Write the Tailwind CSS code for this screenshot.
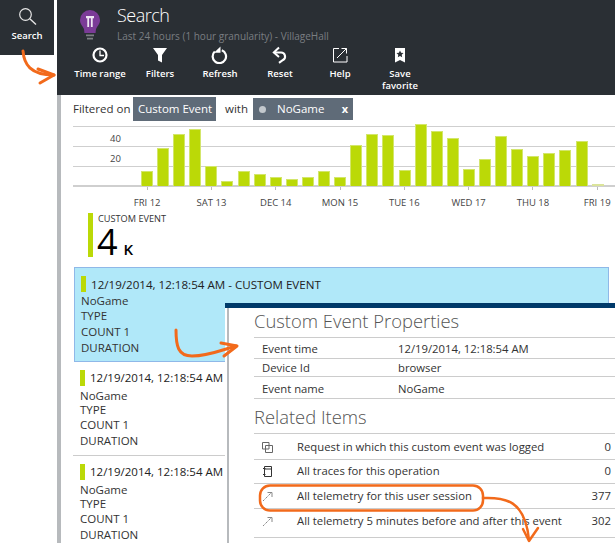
<!DOCTYPE html>
<html lang="en">
<head>
<meta charset="UTF-8" />
<title>Search</title>
<script src="https://cdn.jsdelivr.net/npm/@tailwindcss/browser@4"></script>
</head>
<body class="bg-white">
<div class="relative flex w-[615px] h-[543px] overflow-hidden bg-white font-['Open_Sans',sans-serif] text-[#333]">

	<!-- left nav -->
	<div class="w-[54px] h-[55px] mr-[3px] bg-[#2a2f34] flex flex-col items-center shrink-0">
		<svg class="mt-[7px] ml-[1px]" width="20" height="20" viewBox="0 0 20 20" fill="none" stroke="#e6e6e6">
			<circle cx="7.500" cy="7.500" r="5.800" stroke-width="1.200" />
			<path d="M11.800 11.800 18 17.500" stroke-width="1.400" />
		</svg>
		<span class="mt-[2px] text-[9.500px] leading-[14px] font-semibold text-white">Search</span>
	</div>

	<div class="w-[558px] flex flex-col">
		<!-- header -->
		<div class="h-[95px] bg-[#2a2f34] shrink-0">
			<div class="flex h-[44px]">
				<svg class="ml-[23px] mt-[10px]" width="20" height="30" viewBox="0 0 20 30">
					<path d="M10 0a10 10 0 0 1 10 10c0 4-2.500 6-3.600 8.300-.5 1-.7 2.500-.8 4.700H4.400c-.1-2.200-.3-3.700-.8-4.700C2.500 16 0 14 0 10A10 10 0 0 1 10 0z" fill="#7b3b97" />
					<path d="M6 6h8v2.200h-1.300V17h-1.800V8.200H9.100V17H7.300V8.200H6z" fill="#eee6f3" />
					<path d="M6 24.500h8v1.800H6zM7 27.700h6v1.800H7z" fill="#7d8083" />
				</svg>
				<div class="ml-[17px]">
					<div class="mt-[2px] text-[18px] leading-[26px] tracking-[-0.5px] font-light text-white">Search</div>
					<div class="mt-[1px] text-[10px] leading-[14px] text-[#7a7e82]">Last 24 hours (1 hour granularity) - VillageHall</div>
				</div>
			</div>
			<div class="flex pl-[13px] text-[9.500px] leading-[12px] font-semibold text-white text-center">
				<div class="w-[60px] flex flex-col items-center">
					<svg width="18" height="18" viewBox="0 0 18 18" fill="none" stroke="#fff" class="mt-[2px]">
						<circle cx="9" cy="9" r="6.500" stroke-width="2.200" />
						<path d="M9 4.500V9.500H13" stroke-width="1.300" />
					</svg>
					<span class="mt-[4px]">Time range</span>
				</div>
				<div class="w-[60px] flex flex-col items-center">
					<svg width="18" height="18" viewBox="0 0 18 18" fill="#fff" class="mt-[2px]">
						<path d="M2 2h14L11 9v7.500L7 14.500V9z" />
					</svg>
					<span class="mt-[4px]">Filters</span>
				</div>
				<div class="w-[60px] flex flex-col items-center">
					<svg width="18" height="18" viewBox="0 0 18 18" fill="none" stroke="#fff" class="mt-[2px]">
						<path d="M3.800 5.500a6.700 6.700 0 1 0 7-1.300" stroke-width="2.200" />
						<path d="M3 6.800h6.500V.5z" fill="#fff" stroke="none" />
					</svg>
					<span class="mt-[4px]">Refresh</span>
				</div>
				<div class="w-[60px] flex flex-col items-center">
					<svg width="18" height="18" viewBox="0 0 18 18" fill="none" stroke="#fff" class="mt-[2px]">
						<path d="M3.500 6.500h6.500a4 4 0 0 1 2 7.500L8 16.800" stroke-width="2.100" />
						<path d="M8 1.500 2.800 6.500 8 11" stroke-width="2" />
					</svg>
					<span class="mt-[4px]">Reset</span>
				</div>
				<div class="w-[60px] flex flex-col items-center">
					<svg width="18" height="18" viewBox="0 0 18 18" fill="none" stroke="#fff" class="mt-[2px]">
						<path d="M8 2.500H2.500V16H16V10" stroke-width="1" />
						<path d="M6 12 15.500 2.500M10.500 2.500h5v5" stroke-width="1" />
					</svg>
					<span class="mt-[4px]">Help</span>
				</div>
				<div class="w-[60px] flex flex-col items-center">
					<svg width="18" height="18" viewBox="0 0 18 18" class="mt-[2px]">
						<path d="M4 2h10v14.500l-5-2.500-5 2.500z" fill="#fff" />
						<path d="m9 4.500 1.100 2.300 2.400.3-1.800 1.700.5 2.500L9 10.100l-2.200 1.200.5-2.500-1.800-1.700 2.400-.3z" fill="#2a2f34" />
					</svg>
					<span class="mt-[4px] block">Save</span>
					<span class="block">favorite</span>
				</div>
			</div>
		</div>

		<!-- content -->
		<div class="flex-1 border-l-[4px] border-[#b7babd] pl-[12px]">
			<div class="flex items-center h-[24px] mt-[2px] mb-[3px] text-[11.500px]">
				<span class="w-[60px]">Filtered on</span>
				<span class="w-[83px] h-[24px] pl-[5px] leading-[24px] bg-[#5f6b78] text-white">Custom Event</span>
				<span class="ml-[9px] w-[28px]">with</span>
				<span class="flex items-center w-[100px] h-[22px] bg-[#5f6b78] text-white">
					<span class="ml-[6px] w-[7px] h-[7px] rounded-full bg-[#c3c8cd]"></span>
					<span class="ml-[11px]">NoGame</span>
					<span class="ml-auto mr-[5px] font-bold text-[11px]">x</span>
				</span>
			</div>

			<!-- chart -->
			<div class="relative h-[63px] border-b-2 border-[#cfcfcf]">
				<div class="absolute left-0 right-0 top-[2px] h-[1px] bg-[#cfcfcf]"></div>
				<div class="absolute left-0 right-0 top-[22px] h-[1px] bg-[#cfcfcf]"></div>
				<div class="absolute left-0 right-0 top-[42px] h-[1px] bg-[#cfcfcf]"></div>
				<span class="absolute left-[37px] top-[8px] text-[9.500px] leading-[14px] text-[#444]">40</span>
				<span class="absolute left-[37px] top-[28px] text-[9.500px] leading-[14px] text-[#444]">20</span>
				<div class="relative flex items-end gap-[4.100px] pl-[68px] h-[62px]">
					<div class="w-[12px] bg-[#bbd907] border border-b-0 border-[#d3e66b]" style="height:15px"></div>
					<div class="w-[12px] bg-[#bbd907] border border-b-0 border-[#d3e66b]" style="height:38px"></div>
					<div class="w-[12px] bg-[#bbd907] border border-b-0 border-[#d3e66b]" style="height:52px"></div>
					<div class="w-[12px] bg-[#bbd907] border border-b-0 border-[#d3e66b]" style="height:57px"></div>
					<div class="w-[12px] bg-[#bbd907] border border-b-0 border-[#d3e66b]" style="height:20px"></div>
					<div class="w-[12px] bg-[#bbd907] border border-b-0 border-[#d3e66b]" style="height:5px"></div>
					<div class="w-[12px] bg-[#bbd907] border border-b-0 border-[#d3e66b]" style="height:15px"></div>
					<div class="w-[12px] bg-[#bbd907] border border-b-0 border-[#d3e66b]" style="height:12px"></div>
					<div class="w-[12px] bg-[#bbd907] border border-b-0 border-[#d3e66b]" style="height:9px"></div>
					<div class="w-[12px] bg-[#bbd907] border border-b-0 border-[#d3e66b]" style="height:7px"></div>
					<div class="w-[12px] bg-[#bbd907] border border-b-0 border-[#d3e66b]" style="height:9px"></div>
					<div class="w-[12px] bg-[#bbd907] border border-b-0 border-[#d3e66b]" style="height:15px"></div>
					<div class="w-[12px] bg-[#bbd907] border border-b-0 border-[#d3e66b]" style="height:9px"></div>
					<div class="w-[12px] bg-[#bbd907] border border-b-0 border-[#d3e66b]" style="height:41px"></div>
					<div class="w-[12px] bg-[#bbd907] border border-b-0 border-[#d3e66b]" style="height:52px"></div>
					<div class="w-[12px] bg-[#bbd907] border border-b-0 border-[#d3e66b]" style="height:51px"></div>
					<div class="w-[12px] bg-[#bbd907] border border-b-0 border-[#d3e66b]" style="height:16px"></div>
					<div class="w-[12px] bg-[#bbd907] border border-b-0 border-[#d3e66b]" style="height:62px"></div>
					<div class="w-[12px] bg-[#bbd907] border border-b-0 border-[#d3e66b]" style="height:55px"></div>
					<div class="w-[12px] bg-[#bbd907] border border-b-0 border-[#d3e66b]" style="height:48px"></div>
					<div class="w-[12px] bg-[#bbd907] border border-b-0 border-[#d3e66b]" style="height:17px"></div>
					<div class="w-[12px] bg-[#bbd907] border border-b-0 border-[#d3e66b]" style="height:27px"></div>
					<div class="w-[12px] bg-[#bbd907] border border-b-0 border-[#d3e66b]" style="height:50px"></div>
					<div class="w-[12px] bg-[#bbd907] border border-b-0 border-[#d3e66b]" style="height:37px"></div>
					<div class="w-[12px] bg-[#bbd907] border border-b-0 border-[#d3e66b]" style="height:30px"></div>
					<div class="w-[12px] bg-[#bbd907] border border-b-0 border-[#d3e66b]" style="height:33px"></div>
					<div class="w-[12px] bg-[#bbd907] border border-b-0 border-[#d3e66b]" style="height:36px"></div>
					<div class="w-[12px] bg-[#bbd907] border border-b-0 border-[#d3e66b]" style="height:45px"></div>
					<div class="w-[12px] bg-[#dbe49a]" style="height:2px"></div>
				</div>
			</div>
			<div class="flex pl-[42px] text-[9.500px] leading-[14px] text-[#444] whitespace-nowrap">
				<div class="w-[64.300px] shrink-0 flex flex-col items-center"><i class="block w-px h-[3px] bg-[#bbb]"></i><span class="mt-[6px]">FRI 12</span></div>
				<div class="w-[64.300px] shrink-0 flex flex-col items-center"><i class="block w-px h-[3px] bg-[#bbb]"></i><span class="mt-[6px]">SAT 13</span></div>
				<div class="w-[64.300px] shrink-0 flex flex-col items-center"><i class="block w-px h-[3px] bg-[#bbb]"></i><span class="mt-[6px]">DEC 14</span></div>
				<div class="w-[64.300px] shrink-0 flex flex-col items-center"><i class="block w-px h-[3px] bg-[#bbb]"></i><span class="mt-[6px]">MON 15</span></div>
				<div class="w-[64.300px] shrink-0 flex flex-col items-center"><i class="block w-px h-[3px] bg-[#bbb]"></i><span class="mt-[6px]">TUE 16</span></div>
				<div class="w-[64.300px] shrink-0 flex flex-col items-center"><i class="block w-px h-[3px] bg-[#bbb]"></i><span class="mt-[6px]">WED 17</span></div>
				<div class="w-[64.300px] shrink-0 flex flex-col items-center"><i class="block w-px h-[3px] bg-[#bbb]"></i><span class="mt-[6px]">THU 18</span></div>
				<div class="w-[64.300px] shrink-0 flex flex-col items-center"><i class="block w-px h-[3px] bg-[#bbb]"></i><span class="mt-[6px]">FRI 19</span></div>
			</div>

			<!-- metric -->
			<div class="flex mt-[3px] ml-[15px] h-[44px]">
				<div class="w-[5px] bg-[#bbd907]"></div>
				<div class="ml-[5px]">
					<div class="text-[9.200px] leading-[12px] text-[#333]">CUSTOM EVENT</div>
					<div class="flex items-baseline mt-[1px] text-black">
						<span class="-ml-[1px] text-[36px] leading-[32px]">4</span>
						<span class="ml-[6px] text-[15px] leading-[15px] font-semibold">K</span>
					</div>
				</div>
			</div>

			<!-- events -->
			<div class="mt-[10px] ml-[1px] w-[535px] h-[95px] bg-[#b0e8f9] border border-[#8fb8e8] pl-[6px] pt-[8px] text-[11.500px] leading-[16px]">
				<div class="flex items-center h-[16px] mb-[1px]"><span class="shrink-0 w-[5px] h-[16px] bg-[#bbd907]"></span><span class="ml-[5px] pt-[1px] text-[11.600px] text-[#222]">12/19/2014, 12:18:54 AM - CUSTOM EVENT</span></div>
				<div>NoGame</div>
				<div class="-mt-[1px]">TYPE</div>
				<div>COUNT 1</div>
				<div>DURATION</div>
			</div>
			<div class="w-[152px] h-[94px] pt-[8px] pl-[7px] border-b border-[#ccc] text-[11.500px] leading-[15.500px]">
				<div class="flex items-center h-[16px] whitespace-nowrap"><span class="shrink-0 w-[5px] h-[16px] bg-[#bbd907]"></span><span class="ml-[5px] text-[#222]">12/19/2014, 12:18:54 AM</span></div>
				<div class="mt-[2px]">NoGame</div>
				<div class="-mt-[2px]">TYPE</div>
				<div>COUNT 1</div>
				<div>DURATION</div>
			</div>
			<div class="w-[152px] pt-[8px] pl-[7px] text-[11.500px] leading-[15.500px]">
				<div class="flex items-center h-[16px] whitespace-nowrap"><span class="shrink-0 w-[5px] h-[16px] bg-[#bbd907]"></span><span class="ml-[5px] text-[#222]">12/19/2014, 12:18:54 AM</span></div>
				<div class="mt-[2px]">NoGame</div>
				<div class="-mt-[2px]">TYPE</div>
				<div>COUNT 1</div>
				<div>DURATION</div>
			</div>
		</div>
	</div>

	<!-- properties blade, over the list -->
	<div class="absolute left-[225px] top-[303px] right-0 bottom-0 bg-white border-t-[5px] border-[#003a6a]">
		<div class="ml-[2px] h-full border-l-[2px] border-[#b7babd] pl-[25px] text-[11.300px] text-[#333]">
			<div class="h-[29px] text-[18.400px] leading-[25px] font-light text-[#555]">Custom Event Properties</div>
			<div class="flex items-center h-[21px] pt-[3px] border-t border-[#ccc] pl-[8px]"><span class="w-[136px]">Event time</span><span>12/19/2014, 12:18:54 AM</span></div>
			<div class="flex items-center h-[18px] pt-[1px] border-t border-[#ccc] pl-[8px]"><span class="w-[136px]">Device Id</span><span>browser</span></div>
			<div class="flex items-center h-[23px] pt-[3px] border-t border-b border-[#ccc] pl-[8px]"><span class="w-[136px]">Event name</span><span>NoGame</span></div>
			<div class="h-[34px] text-[18.400px] leading-[35px] font-light text-[#555]">Related Items</div>
			<div class="flex items-center h-[26px] pt-[1px] border-t border-[#ccc]">
				<svg class="ml-[8px]" width="11" height="11" viewBox="0 0 11 11" fill="none" stroke="#666"><path d="M.5.500h6.500v6.500H.5zM3.500 3.500h7v7h-7z" /></svg>
				<span class="ml-[24px]">Request in which this custom event was logged</span><span class="ml-auto mr-[4px]">0</span>
			</div>
			<div class="flex items-center h-[24px] border-t border-[#ccc]">
				<svg class="ml-[8px]" width="11" height="11" viewBox="0 0 11 11" fill="none" stroke="#333"><path d="M2.500.500h7v10h-7zM2.500 3h7M1 2.500h2.500M1 8.500h2.500" /></svg>
				<span class="ml-[24px]">All traces for this operation</span><span class="ml-auto mr-[4px]">0</span>
			</div>
			<div class="flex items-center h-[25px] pt-[1px] border-t border-[#ccc]">
				<svg class="ml-[8px]" width="11" height="11" viewBox="0 0 11 11" fill="none" stroke="#888"><path d="M1 10 9.500 1.500" stroke-dasharray="1.500 .6" /><path d="M5.500 1.500h4.500V6" /></svg>
				<span class="ml-[24px]">All telemetry for this user session</span><span class="ml-auto mr-[4px]">377</span>
			</div>
			<div class="flex items-center h-[30px] pb-[3px] border-y border-[#ccc]">
				<svg class="ml-[8px]" width="11" height="11" viewBox="0 0 11 11" fill="none" stroke="#888"><path d="M1 10 9.500 1.500" stroke-dasharray="1.500 .6" /><path d="M5.500 1.500h4.500V6" /></svg>
				<span class="ml-[24px]">All telemetry 5 minutes before and after this event</span><span class="ml-auto mr-[4px]">302</span>
			</div>
		</div>
	</div>

	<!-- orange annotations -->
	<svg class="absolute left-0 top-0 pointer-events-none" width="615" height="543" viewBox="0 0 615 543" fill="none" stroke="#f26a1b" stroke-linecap="round" stroke-linejoin="round">
		<path d="M23 51C24 64 30 75 54 75" stroke-width="3" />
		<path d="M38 69 54 75 40 83" stroke-width="3" />
		<path d="M176 330C176 346 178 356 192 356C208 356 222 350 236 346" stroke-width="3" />
		<path d="M221 343 237 346 224 356" stroke-width="3" />
		<rect x="260" y="485.500" width="223" height="25" rx="10" stroke-width="2.500" />
		<path d="M483 498C505 497 525 500 529 540" stroke-width="2.500" />
		<path d="M523 529 529 541 538 528" stroke-width="2.500" />
	</svg>
</div>
</body>
</html>
